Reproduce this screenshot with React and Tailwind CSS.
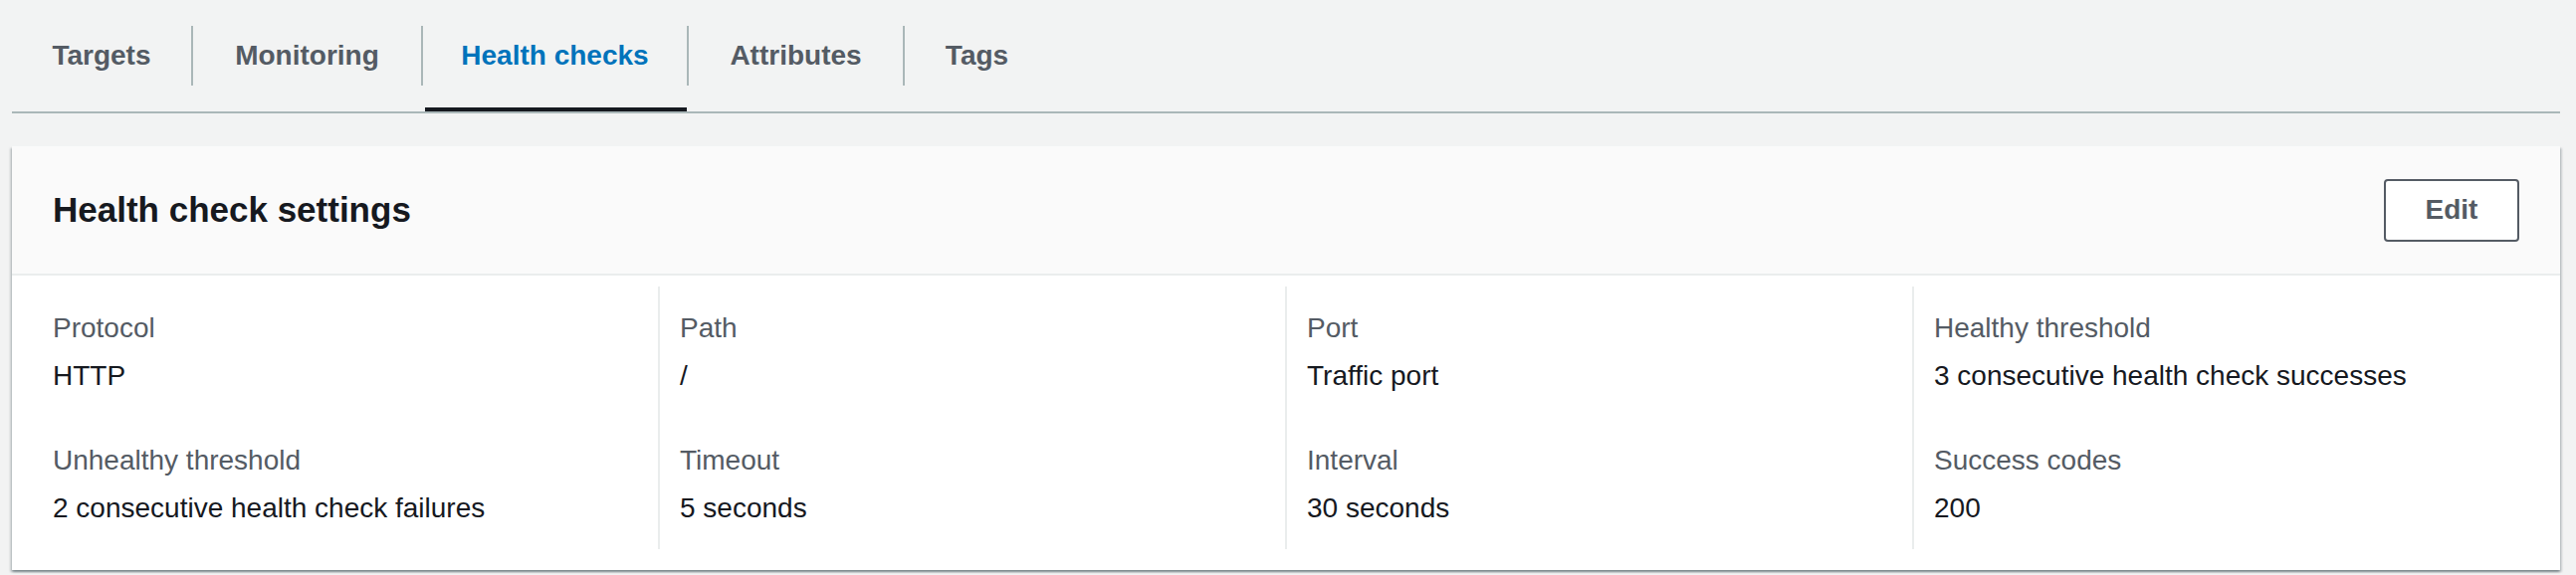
import React from "react";

/*
  Target group detail – "Health checks" tab
  - tab strip with separators and active underline
  - settings panel with 4-column key/value grid
*/

const tabs = [
  { label: "Targets", width: "w-[180px]" },
  { label: "Monitoring", width: "w-[231px]" },
  { label: "Health checks", width: "w-[267px]", active: true },
  { label: "Attributes", width: "w-[217px]" },
  { label: "Tags", width: "w-[147px]" },
];

const columns = [
  [
    { label: "Protocol", value: "HTTP" },
    { label: "Unhealthy threshold", value: "2 consecutive health check failures" },
  ],
  [
    { label: "Path", value: "/" },
    { label: "Timeout", value: "5 seconds" },
  ],
  [
    { label: "Port", value: "Traffic port" },
    { label: "Interval", value: "30 seconds" },
  ],
  [
    { label: "Healthy threshold", value: "3 consecutive health check successes" },
    { label: "Success codes", value: "200" },
  ],
];

export default function App() {
  return (
    <div className="w-full h-[578px] bg-[#f2f3f3] pl-[12px] pr-[16px] font-['Liberation_Sans',Arial,sans-serif] overflow-hidden">
      {/* Tabs */}
      <div className="flex pt-[26px] border-b-2 border-[#aab7b8]">
        {tabs.map((tab, i) => (
          <div key={tab.label} className={`flex flex-col ${tab.width}`}>
            <div
              className={`h-[60px] flex items-center justify-center text-[28px] font-bold ${
                i > 0 ? "border-l-2 border-[#aab7b8]" : ""
              } ${tab.active ? "text-[#0073bb]" : "text-[#545b64]"}`}
            >
              {tab.label}
            </div>
            <div className="h-[22px]" />
            <div className={`h-[4px] ml-[4px] ${tab.active ? "bg-[#16191f]" : ""}`} />
          </div>
        ))}
      </div>

      {/* Panel */}
      <div className="mt-[33px] bg-white shadow-[0_2px_2px_0_rgba(0,28,36,0.3),2px_2px_2px_0_rgba(0,28,36,0.15),-2px_2px_2px_0_rgba(0,28,36,0.15)]">
        <div className="h-[130px] flex items-center justify-between pl-[41px] pr-[41px] bg-[#fafafa] border-b-2 border-[#eaeded]">
          <h2 className="text-[35px] font-bold text-[#16191f]">Health check settings</h2>
          <button className="w-[136px] h-[63px] border-2 border-[#545b64] rounded-[4px] bg-white text-[#545b64] text-[28px] font-bold">
            Edit
          </button>
        </div>

        <div className="grid grid-cols-4 pl-[19px] pr-[21px] pt-[11px] pb-[21px]">
          {columns.map((col, i) => (
            <div
              key={i}
              className={`pt-[22px] pb-[21px] ${i > 0 ? "border-l-2 border-[#eaeded] pl-[20px]" : "pl-[22px]"}`}
            >
              {col.map((item, j) => (
                <div key={item.label} className={j > 0 ? "mt-[45px]" : ""}>
                  <div className="text-[28px] leading-[40px] text-[#545b64]">{item.label}</div>
                  <div className="mt-[8px] text-[28px] leading-[40px] text-[#16191f]">{item.value}</div>
                </div>
              ))}
            </div>
          ))}
        </div>
      </div>
    </div>
  );
}
